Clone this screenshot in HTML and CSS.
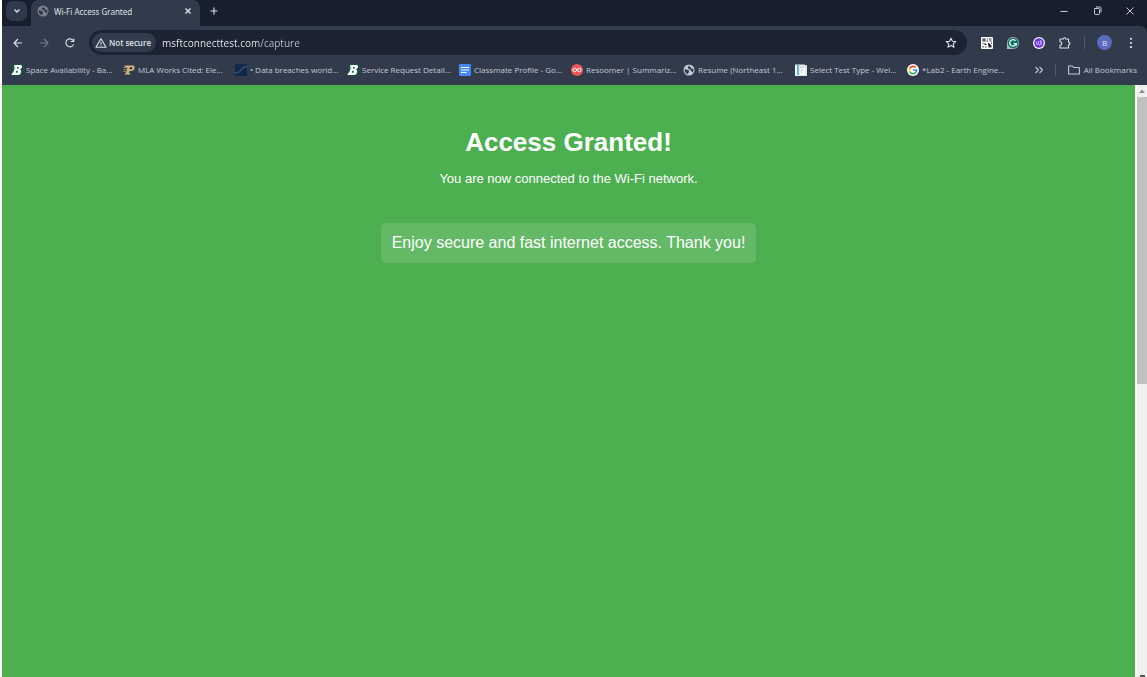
FILE: index.html
```html
<!DOCTYPE html>
<html lang="en">
<head>
<meta charset="utf-8">
<title>Wi-Fi Access Granted</title>
<link rel="stylesheet" href="styles.css">
</head>
<body>
<svg class="sprite" aria-hidden="true">
  <symbol id="globe" viewBox="0 0 12 12"><circle cx="6" cy="6" r="5.5" fill="currentColor"/><path d="M1.700 5.200C3 5 3.600 5.800 4.800 6c1 .2 1.600.6 1.200 1.500C5.600 8.200 5.500 9.400 4.700 10 2.900 9.400 1.300 7.600 1.700 5.200zM5.800 1.600c.8.300.6 1.300 1.500 1.500 1 .3.3 1.200 1.200 1.600.8.300 1.100-.2 1.800 0 .3 1.700-.1 3-.9 3.900-.7-.4-.3-1.400-1.200-1.700-1-.4-.5-1.300-1.300-1.600-.9-.4-2-.3-2-1.300s1-1.100.9-2.400z" fill="#30394a"/></symbol>
  <symbol id="baylor" viewBox="0 0 12 12"><rect x="1" width="11" height="12" rx="1" fill="#17543f"/><path d="M3.500 1h6c2 0 2.200 3-.4 4.400C11.200 7 9.800 11 7 11H.5l.7-2.300h1L4 3.300H2.800z" fill="#fff"/><path d="M6.300 3.100h1.500L7.300 4.700H5.800zM5.300 6.800h1.700l-.7 2H4.700z" fill="#17543f"/></symbol>
</svg>
<div class="browser">
  <header class="chrome">
    <div class="tabstrip">
      <button class="tab-search" aria-label="Search tabs"><svg viewBox="0 0 12 12"><path d="M3.500 4.500 6 7l2.500-2.500" class="line bold"/></svg></button>
      <div class="tab">
        <svg class="tab-icon" viewBox="0 0 12 12"><use href="#globe"/></svg>
        <span class="tab-title">Wi-Fi Access Granted</span>
        <button class="tab-close" aria-label="Close tab"><svg viewBox="0 0 12 12"><path d="m3.500 3.500 5 5m0-5-5 5" class="line bold"/></svg></button>
      </div>
      <button class="new-tab" aria-label="New tab"><svg viewBox="0 0 12 12"><path d="M6 2.500v7M2.500 6h7" class="line"/></svg></button>
      <div class="window-controls">
        <button aria-label="Minimize"><svg viewBox="0 0 12 12"><path d="M2.500 6.500h7" class="line thin"/></svg></button>
        <button aria-label="Restore"><svg viewBox="0 0 12 12"><path d="M3.500 3.500h4q1 0 1 1v4q0 1-1 1h-3q-1 0-1-1v-4q0-1 1-1M5 2h3.500Q10 2 10 3.500V7.500" class="line thin"/></svg></button>
        <button aria-label="Close"><svg viewBox="0 0 12 12"><path d="m2.500 2.500 7 7m0-7-7 7" class="line thin"/></svg></button>
      </div>
    </div>
    <div class="toolbar">
      <nav class="nav-buttons" aria-label="History">
        <button aria-label="Back"><svg viewBox="0 0 12 12"><path d="M10 6H2.200M6 2 2 6l4 4" class="line"/></svg></button>
        <button class="dim" aria-label="Forward"><svg viewBox="0 0 12 12"><path d="M2 6h7.800M6 2l4 4-4 4" class="line"/></svg></button>
        <button aria-label="Reload"><svg viewBox="0 0 12 12"><path d="M9.600 7.400A4 4 0 1 1 9.300 3.700M9.800 1.500v3h-3" class="line"/></svg></button>
      </nav>
      <div class="omnibox">
        <button class="security"><svg viewBox="0 0 12 12"><path d="M6 1.800 11 10.300H1zM6 5v2.500M6 8.200v1" class="line"/></svg><span>Not secure</span></button>
        <input class="url" type="text" aria-label="Address" value="msftconnecttest.com/capture">
        <button class="star" aria-label="Bookmark this page"><svg viewBox="0 0 12 12"><path d="m6 1.200 1.400 3.100 3.400.3-2.600 2.200.8 3.400L6 8.500l-3 1.700.8-3.400L1.200 4.600l3.400-.3z" class="line"/></svg></button>
      </div>
      <div class="extensions">
        <button aria-label="QR code"><svg viewBox="0 0 12 12"><rect width="12" height="12" rx="1" fill="#fff"/><path d="M1.500 1.500h3v3h-3zM6 1.500h1v1H6zm2 0h2.500v1H8zM5.500 3.500h1.500v1H5.500zM8.500 3.500h2v1h-2zM1.500 6h1v1h-1zM3.500 6h1v1h1v1h-2zM1.500 9h1v1.500h-1zM4 9.500h1.500v1H4zM7 6h1l2.500 2.500v2H7.500V8.500H7zM10 5.500h1v1h-1z" fill="#222936"/><path d="M2.500 2.500h1v1h-1z" fill="#fff"/></svg></button>
        <button aria-label="Grammarly"><svg viewBox="0 0 12 12"><path d="M0 12V6a6 6 0 1 1 6 6z" fill="#aebbc2"/><circle cx="6" cy="6" r="5.300" fill="#087461"/><path d="M8.500 3.700A3.300 3.300 0 1 0 9.200 6.600H6.700M9.300 6.500v2" fill="none" stroke="#fff" stroke-width="1.200"/></svg></button>
        <button aria-label="Wordtune"><svg viewBox="0 0 12 12"><circle cx="6" cy="6" r="6" fill="#fff"/><circle cx="6" cy="6" r="4.800" fill="#6935e2"/><path d="M2.800 4.200c1 0 .2 3.800 1.300 3.800S5 5 6 4.200c-.8 1-.6 3.800.4 3.800S8 6 7.600 3.500c1.200 2 1.200 4-.4 5" fill="none" stroke="#e5d9ff" stroke-width=".7"/></svg></button>
        <button aria-label="Extensions"><svg viewBox="0 0 12 12"><path d="M1 2h3.200a1.300 1.300 0 0 1 2.600 0H9.500v3a1.400 1.400 0 0 1 0 2.800V11H1V8.300a1.700 1.700 0 0 0 0-3.500z" class="line"/></svg></button>
      </div>
      <span class="divider"></span>
      <button class="avatar" aria-label="Profile">B</button>
      <button class="menu" aria-label="Menu"><svg viewBox="0 0 12 12" fill="currentColor"><circle cx="6" cy="1.800" r="1.100"/><circle cx="6" cy="6" r="1.100"/><circle cx="6" cy="10.200" r="1.100"/></svg></button>
    </div>
    <nav class="bookmarks" aria-label="Bookmarks">
      <div class="bookmark-list">
        <a href="#"><svg viewBox="0 0 12 12"><use href="#baylor"/></svg><span>Space Availability - Ba…</span></a>
        <a href="#"><svg viewBox="0 0 12 12"><path d="M1.500 1.500H10q2 0 1.500 2.500Q11 7 8 7H6.500L6 9h1v1.500H2V9h1l1.300-5H2z" fill="#cdb583"/><path d="M7 3.300h1.800q.8.200.5 1T8 5.300H6.500z" fill="#272219"/><path d="M.5 3.500H4M.5 5.500h3M0 7.500h3" stroke="#998861" stroke-width=".9"/></svg><span>MLA Works Cited: Ele…</span></a>
        <a href="#"><svg viewBox="0 0 12 12"><path d="M0 0h12v12H0z" fill="#10294a"/><path d="M0 9q4 .3 6-3t6-3.500" fill="none" stroke="#36506b" stroke-width="1.300"/></svg><span>• Data breaches world…</span></a>
        <a href="#"><svg viewBox="0 0 12 12"><use href="#baylor"/></svg><span>Service Request Detail…</span></a>
        <a href="#"><svg viewBox="0 0 12 12"><rect width="12" height="12" rx="1" fill="#4687f5"/><path d="M2 3.500h8M2 6h8M2 8.500h5.500" stroke="#fff" stroke-width="1.200"/></svg><span>Classmate Profile - Go…</span></a>
        <a href="#"><svg viewBox="0 0 12 12"><circle cx="6" cy="6" r="6" fill="#ef5355"/><circle cx="3.700" cy="6" r="1.800" class="ring"/><circle cx="8.300" cy="6" r="1.800" class="ring"/></svg><span>Resoomer | Summariz…</span></a>
        <a href="#"><svg viewBox="0 0 12 12"><use href="#globe"/></svg><span>Resume (Northeast 1…</span></a>
        <a href="#"><svg viewBox="0 0 12 12"><path d="M0 .5h9l3 1V12H0z" fill="#dfe6ec"/><path d="M0 1h2v10H0z" fill="#f8fbfd"/><path d="M2 1h1.600v10H2z" fill="#57a7d4"/><path d="M5 3h5v8H5z" fill="#f8fafb"/><path d="M5 3.500h4M5.500 6h3M5.500 8h2" stroke="#a3b5c3" stroke-width=".7"/></svg><span>Select Test Type - Wel…</span></a>
        <a href="#"><svg viewBox="0 0 12 12"><circle cx="6" cy="6" r="6" fill="#fff"/><g fill="none" stroke-width="1.700"><path d="M8.700 3.500A3.700 3.700 0 0 0 2.800 4.200" stroke="#ea4335"/><path d="M2.800 4.200a3.700 3.700 0 0 0 0 3.600" stroke="#fbbc05"/><path d="M2.800 7.800a3.700 3.700 0 0 0 5.600 1" stroke="#34a853"/><path d="M8.400 8.800A3.700 3.700 0 0 0 9.600 6H6" stroke="#4285f4"/></g></svg><span>*Lab2 - Earth Engine…</span></a>
      </div>
      <button class="more" aria-label="More bookmarks"><svg viewBox="0 0 12 12"><path d="m2.500 3 3 3-3 3m4-6 3 3-3 3" class="line"/></svg></button>
      <span class="divider"></span>
      <button class="all-bookmarks"><svg viewBox="0 0 12 12"><path d="M.6 9.500v-7.500h3.700L5.600 3.500h5.800v6.500H.6z" class="line"/></svg><span>All Bookmarks</span></button>
    </nav>
  </header>
  <div class="viewport">
    <main class="page">
      <h1>Access Granted!</h1>
      <p class="status">You are now connected to the Wi-Fi network.</p>
      <p class="message">Enjoy secure and fast internet access. Thank you!</p>
    </main>
    <div class="scrollbar" aria-hidden="true">
      <svg viewBox="0 0 10 12"><path d="M2 8h6L5 4.500z" fill="#8b8b8b"/></svg>
      <div class="track"><div class="thumb"></div></div>
      <span class="scroll-end"></span>
    </div>
  </div>
</div>
</body>
</html>
```

FILE: styles.css
```css
* { box-sizing: border-box; }
body { margin: 0; background: #fff; font-family: "Open Sans", "Noto Sans", sans-serif; }
button { display: flex; align-items: center; justify-content: center; padding: 0; border: 0; background: none; color: inherit; font: inherit; }
svg { display: block; flex: none; width: 12px; height: 12px; }
.sprite { position: absolute; width: 0; height: 0; }
.line { fill: none; stroke: currentColor; stroke-width: 1.1; stroke-linejoin: round; }
.bold { stroke-width: 1.4; }
.thin { stroke-width: .9; }
.ring { fill: none; stroke: #fff; stroke-width: 1; }

.browser { display: flex; flex-direction: column; min-height: 100vh; padding-left: 2px; }
.chrome { background: #171f2e; color: #dce1e9; }
.tabstrip { display: flex; align-items: center; height: 26px; padding-left: 4px; }
.tab-search { width: 21px; height: 20px; margin-bottom: 4px; border-radius: 7px; background: #30394a; }
.tab { display: flex; align-items: center; align-self: stretch; width: 169px; margin-left: 4px; padding: 0 6px 4px; border-radius: 7px 7px 0 0; background: #323b4c; font-family: "Noto Sans", sans-serif; font-size: 8px; }
.tab-icon { color: #7b828d; }
.tab-title { flex: 1; margin-left: 5px; }
.new-tab { margin: 0 0 4px 8px; }
.window-controls { display: flex; margin: 0 11px 4px auto; gap: 21px; }

.toolbar { display: flex; align-items: center; height: 33px; padding: 0 10px; border-radius: 0 7px 0 0; background: #323b4c; }
.nav-buttons { display: flex; gap: 14px; }
.dim { color: #747c89; }
.omnibox { display: flex; flex: 1; align-items: center; height: 25px; margin-left: 13px; padding: 0 10px 0 3px; border-radius: 13px; background: #1c2433; }
.security { height: 19px; gap: 2px; padding: 0 5px 0 3px; border-radius: 10px; background: #323b4c; font-size: 8px; font-weight: 600; }
.url { flex: 1; min-width: 0; margin-left: 6px; padding: 0; border: 0; outline: 0; background: linear-gradient(90deg, #f0f2f6 97px, #bcc3cf 97px); background-clip: text; color: transparent; font: 10px "Open Sans", "Noto Sans", sans-serif; }
.extensions { display: flex; gap: 14px; margin-left: 14px; }
.divider { width: 1px; height: 12px; background: #535c6c; }
.toolbar .divider { margin-left: 13px; }
.avatar { width: 15px; height: 15px; margin-left: 12px; border-radius: 50%; background: #5c6bc0; font-size: 8px; }
.menu { margin-left: 13px; }

.bookmarks { display: flex; align-items: center; height: 26px; padding: 0 10px 5px 9px; background: #323b4c; color: #c3c9d3; font-size: 8px; }
.bookmark-list { display: flex; flex: 1; min-width: 0; }
.bookmark-list a { display: flex; flex: none; align-items: center; gap: 3px; width: 112px; color: inherit; text-decoration: none; white-space: nowrap; }
.bookmarks .divider { margin: 0 12px 0 10px; }
.all-bookmarks { gap: 4px; white-space: nowrap; }

.viewport { display: flex; flex: 1; }
.page { display: flex; flex: 1; flex-direction: column; align-items: center; padding: 42px 0; background: #4caf50; color: #fff; font-family: "Liberation Sans", Arial, sans-serif; text-align: center; }
h1, p { margin: 0; }
h1 { font-size: 26px; line-height: 30px; }
.status { margin-top: 14px; font-size: 13px; line-height: 16px; }
.message { margin-top: 36px; padding: 10px 11px; border-radius: 5px; background: rgba(255, 255, 255, .13); font-size: 16px; line-height: 20px; }
.scrollbar { display: flex; flex-direction: column; width: 12px; border-left: 2px solid #fff; background: #f0f0f0; }
.scrollbar svg { width: 10px; }
.track { flex: 1; }
.thumb { height: 287px; background: #c1c1c1; }
.scroll-end { align-self: center; width: 5px; height: 2px; background: #505050; }
```
